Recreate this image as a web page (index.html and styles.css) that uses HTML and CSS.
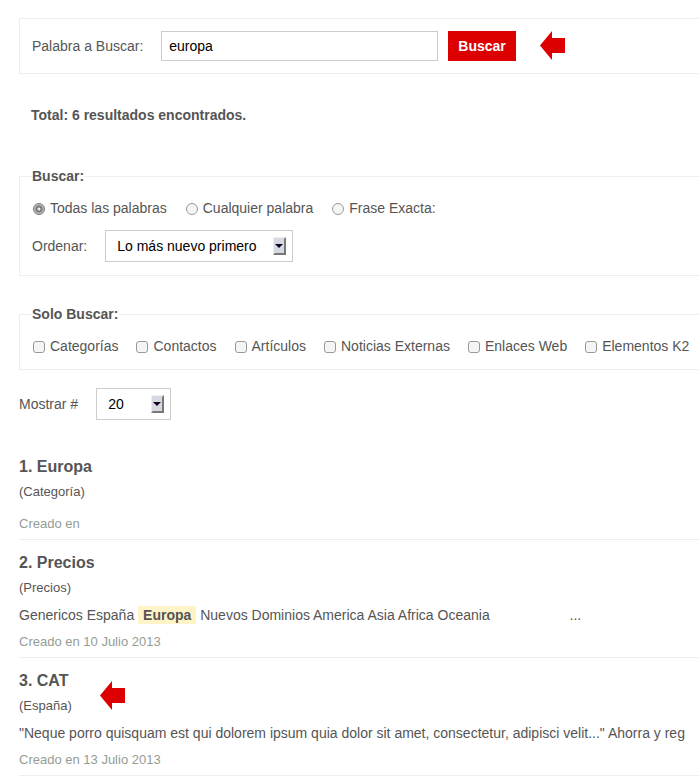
FILE: index.html
```
<!DOCTYPE html>
<html lang="es">
<head>
    <meta charset="UTF-8">
    <meta name="viewport" content="width=device-width, initial-scale=1.0">
    <title>Buscar</title>
    <link rel="stylesheet" href="styles.css">
</head>
<body>
    <div class="search">
        <form>
            <div class="search-box">
                <label for="searchword">Palabra a Buscar:</label>
                <input type="text" id="searchword" class="inputbox" value="europa">
                <button type="submit" class="button">Buscar</button>
                <svg class="arrow" width="25" height="29" viewBox="0 0 25 29"><path fill="#d00" d="M0 14.5 12 0v7h13v15H12v7z"/></svg>
            </div>

            <p class="total">Total: 6 resultados encontrados.</p>

            <fieldset class="phrases">
                <legend>Buscar:</legend>
                <div class="options">
                    <label><input type="radio" name="searchphrase" checked>Todas las palabras</label>
                    <label><input type="radio" name="searchphrase">Cualquier palabra</label>
                    <label><input type="radio" name="searchphrase">Frase Exacta:</label>
                </div>
                <div class="ordering">
                    <label for="ordering">Ordenar:</label>
                    <select id="ordering">
                        <option>Lo más nuevo primero</option>
                    </select>
                </div>
            </fieldset>

            <fieldset class="only">
                <legend>Solo Buscar:</legend>
                <div class="options">
                    <label><input type="checkbox">Categorías</label>
                    <label><input type="checkbox">Contactos</label>
                    <label><input type="checkbox">Artículos</label>
                    <label><input type="checkbox">Noticias Externas</label>
                    <label><input type="checkbox">Enlaces Web</label>
                    <label><input type="checkbox">Elementos K2</label>
                </div>
            </fieldset>

            <div class="limit">
                <label for="limit">Mostrar #</label>
                <select id="limit">
                    <option>20</option>
                </select>
            </div>
        </form>

        <div class="results">
            <div class="result">
                <h3>1. <a href="#">Europa</a></h3>
                <p class="category">(Categoría)</p>
                <p class="text"></p>
                <p class="created">Creado en</p>
            </div>
            <div class="result">
                <h3>2. <a href="#">Precios</a></h3>
                <p class="category">(Precios)</p>
                <p class="text">Genericos España <span class="highlight">Europa</span> Nuevos Dominios America Asia Africa Oceania <span class="more">...</span></p>
                <p class="created">Creado en 10 Julio 2013</p>
            </div>
            <div class="result">
                <div class="result-head">
                    <div>
                        <h3>3. <a href="#">CAT</a></h3>
                        <p class="category">(España)</p>
                    </div>
                    <svg class="arrow" width="25" height="29" viewBox="0 0 25 29"><path fill="#d00" d="M0 14.5 12 0v7h13v15H12v7z"/></svg>
                </div>
                <p class="text">"Neque porro quisquam est qui dolorem ipsum quia dolor sit amet, consectetur, adipisci velit..." Ahorra y reg</p>
                <p class="created">Creado en 13 Julio 2013</p>
            </div>
        </div>
    </div>
</body>
</html>
```
FILE: styles.css
```
* {
    box-sizing: border-box;
}
body {
    margin: 0;
    overflow-x: hidden;
    background-color: #fff;
    font: 14px/22px "Liberation Sans", Arial, sans-serif;
    color: #555;
}
h3, p {
    margin: 0;
}
a {
    color: inherit;
    text-decoration: none;
}
.search {
    padding: 18px 0 0 19px;
}
.search-box {
    display: flex;
    align-items: flex-start;
    padding: 12px;
    border: 1px solid #eee;
    border-right: none;
}
.search-box label {
    line-height: 30px;
    margin-right: 18px;
}
.inputbox {
    width: 277px;
    height: 30px;
    padding: 0 7px;
    border: 1px solid #ccc;
    font: inherit;
    color: #000;
}
.button {
    height: 30px;
    margin: 0 24px 0 10px;
    padding: 0 10px;
    border: none;
    background-color: #d00;
    color: #fff;
    font: inherit;
    font-weight: bold;
    cursor: pointer;
}
.arrow {
    flex: none;
}
.total {
    margin: 30px 12px 39px;
    font-weight: bold;
}
fieldset {
    min-width: 0;
    margin: 0;
    padding: 10px 12px 12px;
    border: 1px solid #eee;
    border-right: none;
}
legend {
    padding: 0 1px 0 0;
    font-weight: bold;
}
.phrases {
    margin-bottom: 27px;
    padding-bottom: 13px;
}
.options {
    display: flex;
    gap: 17px;
    white-space: nowrap;
}
.phrases .options {
    gap: 18px;
}
.options label {
    display: flex;
    align-items: center;
}
.options input {
    appearance: none;
    width: 12px;
    height: 12px;
    margin: 2px 5px 0 1px;
    border: 1px solid #999;
    border-radius: 3px;
    background-color: #f4f6f5;
}
.options input[type="radio"] {
    border-radius: 50%;
}
.options input[type="radio"]:checked {
    border-color: #777;
    background: radial-gradient(circle, #eee 0 1px, #777 2px 3px, #bbb 4px);
}
.ordering, .limit {
    display: flex;
    align-items: center;
    gap: 18px;
}
.ordering {
    margin-top: 11px;
}
.limit {
    margin: 18px 0 24px;
}
select {
    appearance: none;
    height: 32px;
    padding: 0 35px 0 11px;
    border: 1px solid #ccc;
    border-radius: 0;
    background: #fff url("data:image/svg+xml,%3Csvg xmlns='http://www.w3.org/2000/svg' width='13' height='18'%3E%3Cpath fill='%23d4dae0' d='M0 0h13v18H0z'/%3E%3Cpath fill='%23eee' d='M0 0h13v1H1v17H0z'/%3E%3Cpath fill='%23777' d='M13 0v18H0l2-2h9V2z'/%3E%3Cpath fill='%23102' d='M2 7h8L6 11z'/%3E%3C/svg%3E") no-repeat right 6px center;
    font: inherit;
    color: #000;
}
#limit {
    width: 75px;
}
.result {
    padding: 11px 0 5px;
    border-bottom: 1px solid #eee;
}
.result h3 {
    margin-bottom: 3px;
    font-size: 16px;
    line-height: 24px;
}
.result-head {
    display: flex;
    align-items: center;
    gap: 28px;
}
.result-head .arrow {
    margin-top: 6px;
}
.category, .created {
    font-size: 13px;
    line-height: 20px;
}
.created {
    color: #959c95;
}
.text {
    margin: 6px 0;
    white-space: nowrap;
    overflow: hidden;
}
.highlight {
    padding: 1px 5px;
    background-color: #fff3c8;
    font-weight: bold;
}
.more {
    margin-left: 76px;
}
```
